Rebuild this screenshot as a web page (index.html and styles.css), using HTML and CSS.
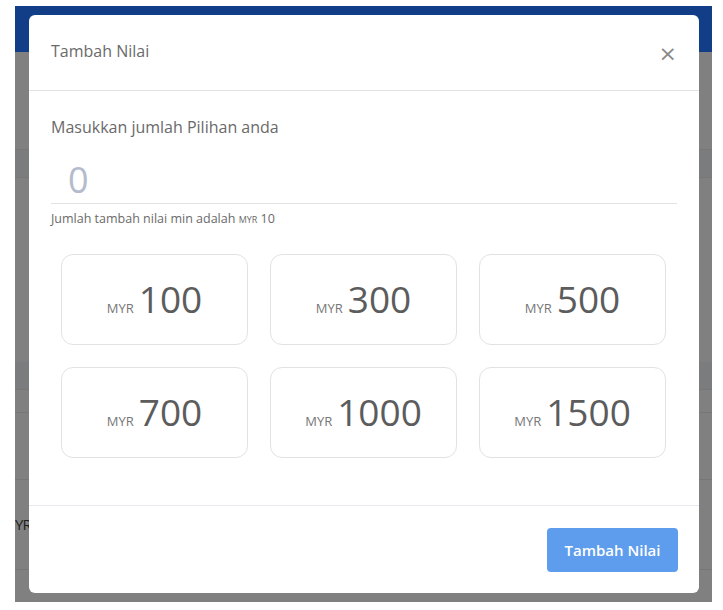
FILE: index.html
```html
<!DOCTYPE html>
<html lang="ms">
    <head>
        <meta charset="UTF-8">
        <title>Tambah Nilai</title>
        <link rel="stylesheet" href="styles.css">
    </head>
    <body>
        <div class="frame">
            <div class="topbar"></div>
            <div class="rows">
                <div class="row r1"></div>
                <div class="row band"></div>
                <div class="row r2"></div>
                <div class="row band"></div>
                <div class="row r3"></div>
                <div class="row r4"></div>
                <div class="row r5"><span class="cell">YR</span></div>
                <div class="row r6"></div>
            </div>

            <div class="modal">
                <div class="modal-header">
                    <h4 class="modal-title">Tambah Nilai</h4>
                    <button class="close" type="button">&times;</button>
                </div>
                <div class="modal-body">
                    <label class="label">Masukkan jumlah Pilihan anda</label>
                    <input class="amount" type="text" placeholder="0">
                    <p class="hint">Jumlah tambah nilai min adalah <small>MYR</small> 10</p>
                    <div class="options">
                        <div class="option"><small>MYR</small><span>100</span></div>
                        <div class="option"><small>MYR</small><span>300</span></div>
                        <div class="option"><small>MYR</small><span>500</span></div>
                        <div class="option"><small>MYR</small><span>700</span></div>
                        <div class="option"><small>MYR</small><span>1000</span></div>
                        <div class="option"><small>MYR</small><span>1500</span></div>
                    </div>
                </div>
                <div class="modal-footer">
                    <button class="btn" type="button">Tambah Nilai</button>
                </div>
            </div>
        </div>
    </body>
</html>
```

FILE: styles.css
```css
body {
    margin: 0;
    background-color: white;
    font-family: "Open Sans", sans-serif;
}

.frame {
    position: relative;
    margin: 6px 0 0 15px;
    width: 697px;
    height: 596px;
    overflow: hidden;
    background-color: #808080;
}
.topbar {
    height: 46px;
    background-color: #113e86;
}
.rows {
    display: flex;
    flex-direction: column;
}
.row {
    border-bottom: 1px solid #777;
}
.r1 { height: 97px; }
.band { height: 27px; background-color: #7b7c7e; }
.r2 { height: 184px; border-bottom: none; }
.r3 { height: 22px; }
.r4 { height: 66px; }
.r5 {
    height: 89px;
    display: flex;
    align-items: center;
}
.r6 { height: 40px; border-bottom: none; }
.cell {
    margin-top: -2px;
    font-size: 15px;
    letter-spacing: -1px;
    color: #1e1e1e;
}

.modal {
    position: absolute;
    top: 9px;
    left: 14px;
    width: 670px;
    height: 578px;
    background-color: white;
    border-radius: 6px;
    display: flex;
    flex-direction: column;
}
.modal-header {
    height: 75px;
    border-bottom: 1px solid #e3e3e3;
    display: flex;
    align-items: center;
    justify-content: space-between;
    padding: 0 22px 0 22px;
}
.modal-title {
    margin: 0 0 4px 0;
    font-size: 16px;
    font-weight: normal;
    color: #6a6a6a;
}
.close {
    border: none;
    background: none;
    padding: 0;
    margin-top: 2px;
    font-family: "DejaVu Sans", sans-serif;
    font-size: 22px;
    color: #8a8a8a;
}

.modal-body {
    flex: 1;
    padding: 25px 22px 0 22px;
}
.label {
    display: block;
    font-size: 16px;
    color: #6a6a6a;
}
.amount {
    display: block;
    box-sizing: border-box;
    width: 626px;
    height: 60px;
    margin-top: 6px;
    padding: 12px 17px 0 17px;
    border: none;
    border-bottom: 1px solid #e3e3e3;
    font-family: "Open Sans", sans-serif;
    font-size: 36px;
    outline: none;
}
.amount::placeholder {
    color: #b3bbcc;
}
.hint {
    margin: 6px 0 0 0;
    font-size: 12.5px;
    color: #6a6a6a;
}
.hint small {
    font-size: 9px;
}

.options {
    display: grid;
    grid-template-columns: repeat(3, 187px);
    grid-auto-rows: 91px;
    gap: 22px 22px;
    margin: 27px 0 0 10px;
}
.option {
    border: 1px solid #e2e2e2;
    border-radius: 12px;
    display: flex;
    align-items: baseline;
    justify-content: center;
    padding-top: 19px;
    box-sizing: border-box;
    color: #5c5c5c;
}
.option small {
    font-size: 13px;
    color: #777;
    margin-right: 5px;
}
.option span {
    font-size: 37px;
    line-height: 50px;
}

.modal-footer {
    height: 87px;
    border-top: 1px solid #e6e9ee;
    display: flex;
    align-items: center;
    justify-content: flex-end;
    padding: 0 21px;
}
.btn {
    width: 131px;
    height: 44px;
    border: none;
    border-radius: 4px;
    background-color: #5e9ded;
    color: white;
    font-family: "Open Sans", sans-serif;
    font-size: 15px;
    font-weight: 600;
}
```
